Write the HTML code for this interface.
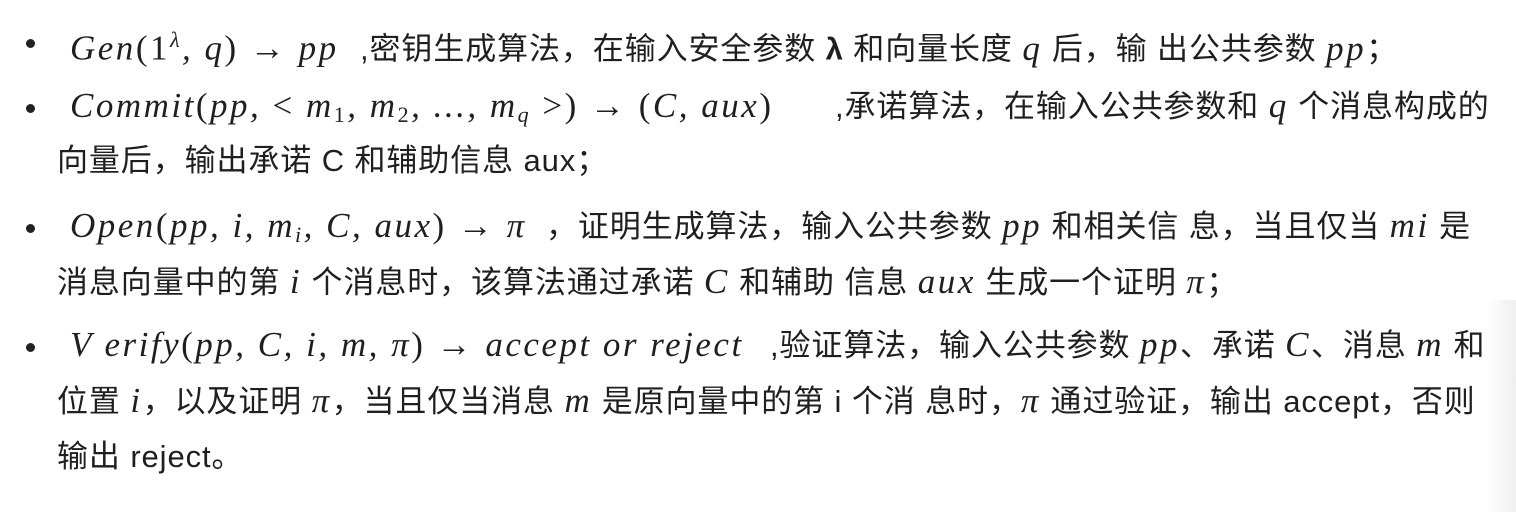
<!DOCTYPE html>
<html><head><meta charset="utf-8"><style>
body{margin:0;width:1516px;height:512px;background:#fff;overflow:hidden;position:relative;font-family:"Liberation Sans","Noto Sans CJK SC",sans-serif;color:#1f1f1f;font-size:31px;letter-spacing:0.9px}
.l{position:absolute;white-space:nowrap;line-height:40px}
.b{position:absolute;width:9px;height:9px;border-radius:50%;background:#222}
.m{font-family:"Liberation Serif",serif;font-style:italic;font-size:35px;letter-spacing:2.5px;display:inline-block;overflow:visible}
.r{font-style:normal}
sub,sup{font-size:22px}
sub{vertical-align:-5px}
.shade{position:absolute;right:0;top:300px;width:30px;height:212px;background:linear-gradient(to right,rgba(240,240,240,0),rgba(235,235,235,.8))}
</style></head><body>
<div class="shade"></div>
<div class="b" style="left:26px;top:39px"></div>
<div class="b" style="left:26px;top:104px"></div>
<div class="b" style="left:26px;top:224px"></div>
<div class="b" style="left:26px;top:343px"></div>

<div class="l" style="left:70px;top:20px"><span class="m" style="width:290px">Gen<span class="r">(1</span><sup>λ</sup>, q<span class="r">) → </span>pp</span>,密钥生成算法，在输入安全参数 <b>λ</b> 和向量长度 <span class="m">q</span> 后，输 出公共参数 <span class="m">pp</span>；</div>

<div class="l" style="left:70px;top:86px"><span class="m" style="width:765px">Commit<span class="r">(</span>pp, <span class="r">&lt;</span> m<sub class="r">1</sub>, m<sub class="r">2</sub>, ..., m<sub>q</sub> <span class="r">&gt;) → (</span>C, aux<span class="r">)</span></span>,承诺算法，在输入公共参数和 <span class="m">q</span> 个消息构成的</div>
<div class="l" style="left:57px;top:141px">向量后，输出承诺 C 和辅助信息 aux；</div>

<div class="l" style="left:70px;top:206px"><span class="m" style="width:476px">Open<span class="r">(</span>pp, i, m<sub>i</sub>, C, aux<span class="r">) → </span>π</span>，证明生成算法，输入公共参数 <span class="m">pp</span> 和相关信 息，当且仅当 <span class="m">mi</span> 是</div>
<div class="l" style="left:57px;top:262px">消息向量中的第 <span class="m">i</span> 个消息时，该算法通过承诺 <span class="m">C</span> 和辅助 信息 <span class="m">aux</span> 生成一个证明 <span class="m">π</span>；</div>

<div class="l" style="left:70px;top:325px"><span class="m" style="width:700px">V erify<span class="r">(</span>pp, C, i, m, π<span class="r">) → </span>accept or reject</span>,验证算法，输入公共参数 <span class="m">pp</span>、承诺 <span class="m">C</span>、消息 <span class="m">m</span> 和</div>
<div class="l" style="left:57px;top:381px">位置 <span class="m">i</span>，以及证明 <span class="m">π</span>，当且仅当消息 <span class="m">m</span> 是原向量中的第 i 个消 息时，<span class="m">π</span> 通过验证，输出 accept，否则</div>
<div class="l" style="left:57px;top:437px">输出 reject。</div>
</body></html>
